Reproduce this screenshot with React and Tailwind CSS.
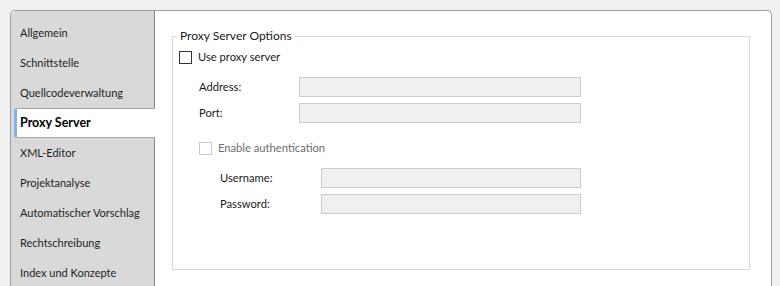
const tabs = [
  "Allgemein",
  "Schnittstelle",
  "Quellcodeverwaltung",
  "Proxy Server",
  "XML-Editor",
  "Projektanalyse",
  "Automatischer Vorschlag",
  "Rechtschreibung",
  "Index und Konzepte",
];

function Checkbox({ disabled }) {
  return (
    <span
      className={
        "w-[13px] h-[13px] shrink-0 bg-white border " +
        (disabled ? "border-[#cccccc]" : "border-[#333333]")
      }
    />
  );
}

function Field({ label, indent, labelWidth, className }) {
  return (
    <div className={"flex items-center h-[20px] " + className}>
      <span className="text-[#1a1a1a]" style={{ marginLeft: indent, width: labelWidth }}>
        {label}
      </span>
      <div className="h-[20px] flex-1 max-w-[282px] border border-[#cccccc] bg-[#f0f0f0]" />
    </div>
  );
}

export default function App() {
  const active = "Proxy Server";

  return (
    <div
      className="w-[780px] h-[286px] overflow-hidden bg-[#f0f0f0] pt-[10px] pl-[10px] pr-[8px] text-[11.2px] leading-[16px]"
      style={{ fontFamily: "Lato, 'Liberation Sans', sans-serif" }}
    >
      <div className="flex h-[290px] bg-white border-l border-t border-r border-[#a0a0a0] rounded-t-[5px]">
        {/* Sidebar */}
        <div className="w-[144px] shrink-0 bg-[#d9d9d9] border-r border-[#8c8c8c] rounded-tl-[4px] pt-[7px]">
          {tabs.map((t) =>
            t === active ? (
              <div
                key={t}
                className="relative z-10 ml-[3px] -mr-[1px] h-[30px] flex items-center bg-white border-y border-l-[3px] border-[#a8a8a8] border-l-[#7eb4ea] rounded-l-[3px] pl-[3px] font-bold text-[12.5px] text-black"
              >
                {t}
              </div>
            ) : (
              <div key={t} className="h-[30px] flex items-center pl-[9px] text-[11px] text-[#1e1e1e]">
                {t}
              </div>
            )
          )}
        </div>

        {/* Content */}
        <div className="flex-1 pl-[17px] pr-[21px] pt-[17px]">
          <fieldset className="h-[242px] border border-[#d9d9d9] pl-[4px]">
            <legend className="px-[3px] text-[12px] text-[#1a1a1a]">Proxy Server Options</legend>

            <div className="flex items-center gap-[6px] h-[16px] mt-[5px] ml-[2px]">
              <Checkbox />
              <span className="text-[#1a1a1a]">Use proxy server</span>
            </div>

            <Field label="Address:" indent="22px" labelWidth="100px" className="mt-[12px]" />
            <Field label="Port:" indent="22px" labelWidth="100px" className="mt-[6px]" />

            <div className="flex items-center gap-[6px] h-[16px] mt-[17px] ml-[22px]">
              <Checkbox disabled />
              <span className="text-[#6d6d6d]">Enable authentication</span>
            </div>

            <div className="w-[404px]">
              <Field label="Username:" indent="43px" labelWidth="101px" className="mt-[12px]" />
              <Field label="Password:" indent="43px" labelWidth="101px" className="mt-[6px]" />
            </div>
          </fieldset>
        </div>
      </div>
    </div>
  );
}
